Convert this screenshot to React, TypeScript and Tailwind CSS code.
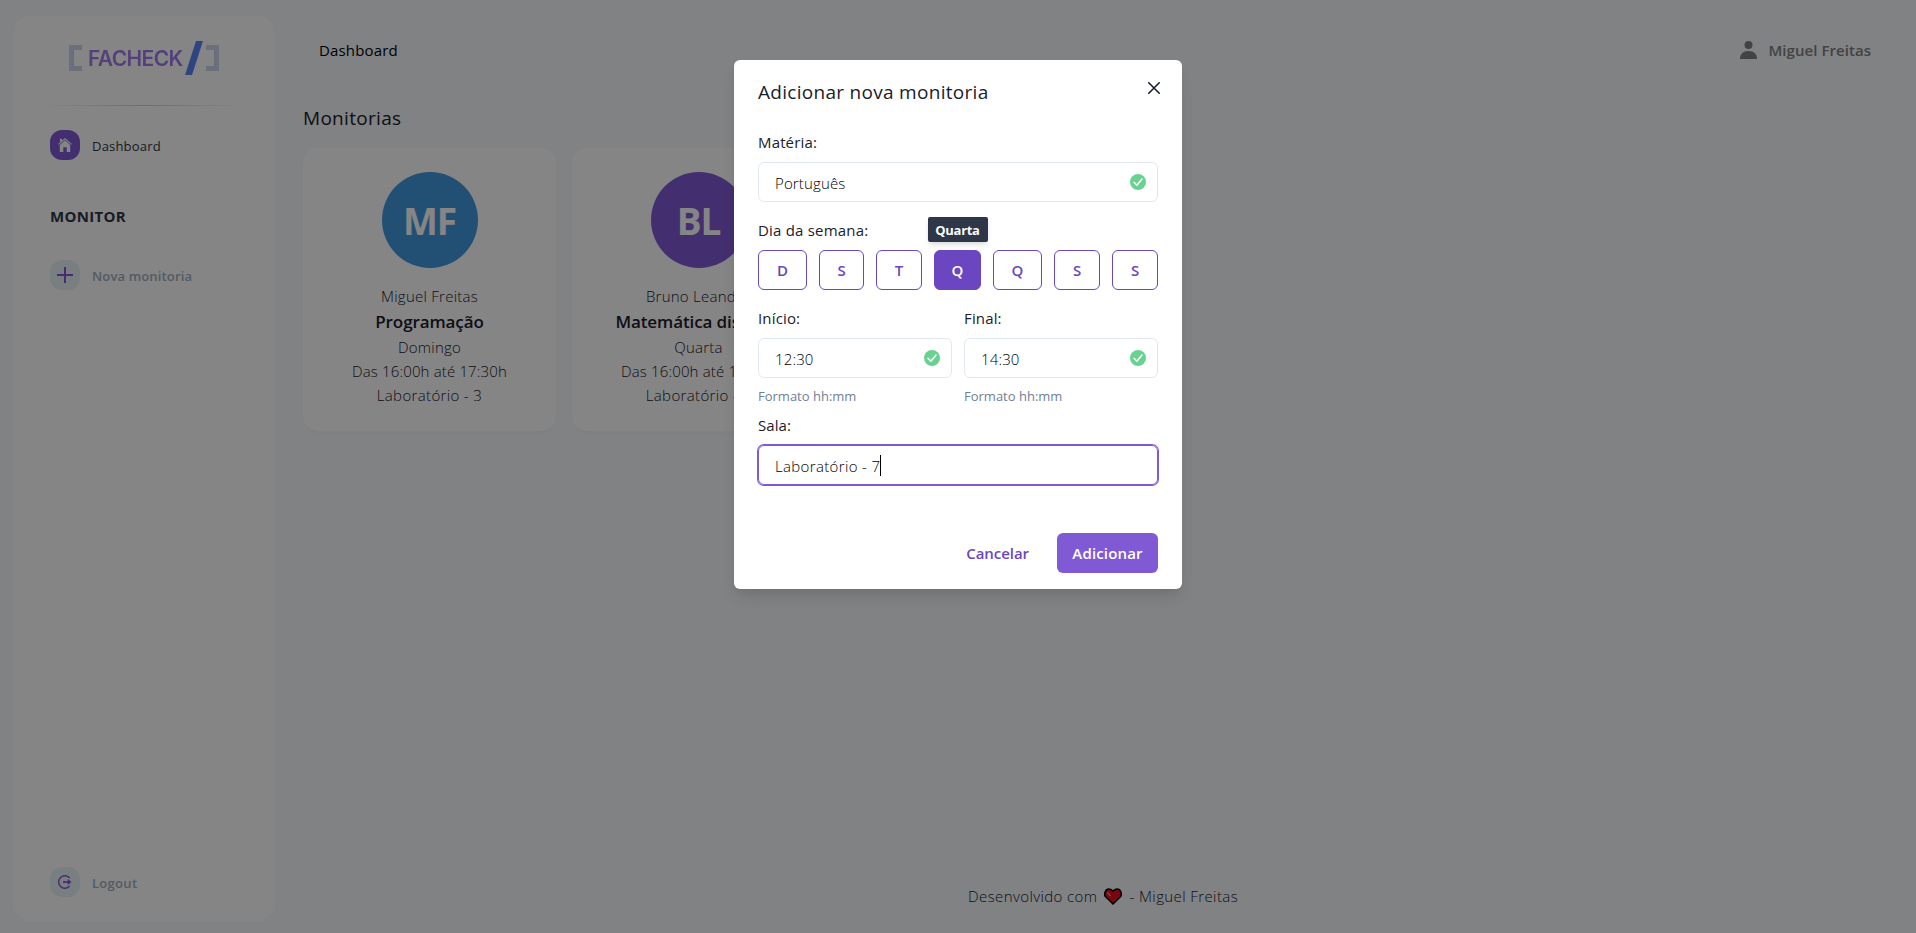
import type { ReactNode } from "react";

type Monitoria = {
  initials: string;
  color: string;
  name: string;
  subject: string;
  day: string;
  time: string;
  room: string;
};

const monitorias: Monitoria[] = [
  { initials: "MF", color: "bg-[#4299e1]", name: "Miguel Freitas", subject: "Programação", day: "Domingo", time: "Das 16:00h até 17:30h", room: "Laboratório - 3" },
  { initials: "BL", color: "bg-[#805ad5]", name: "Bruno Leandro", subject: "Matemática discreta", day: "Quarta", time: "Das 16:00h até 17:30h", room: "Laboratório - 5" },
];

const days = [
  { label: "D", width: "w-[49px]" },
  { label: "S", width: "w-[45px]" },
  { label: "T", width: "w-[46px]" },
  { label: "Q", width: "w-[47px]", active: true },
  { label: "Q", width: "w-[49px]" },
  { label: "S", width: "w-[46px]" },
  { label: "S", width: "w-[46px]" },
];

function Logo() {
  return (
    <div className="mt-[25px] ml-[55px] flex h-[34px] items-center">
      <svg width="13" height="26" viewBox="0 0 13 26" fill="#ccd6eb"><path d="M0 0h13v5H5v16h8v5H0z" /></svg>
      <span className="ml-[6px] w-[98px] pt-0.5 whitespace-nowrap bg-linear-to-r from-[#a57be8] to-[#9f78f0] bg-clip-text font-[Inter] text-[21px] leading-[34px] font-semibold tracking-[-0.6px] text-transparent">FACHECK</span>
      <svg width="18" height="34" viewBox="0 0 18 34" fill="#5a85fa" className="-ml-px"><path d="M11 0h7L7 34H0z" /></svg>
      <svg width="13" height="26" viewBox="0 0 13 26" fill="#ccd6eb" className="ml-[3px]"><path d="M13 0H0v5h8v16H0v5h13z" /></svg>
    </div>
  );
}

function HomeIcon() {
  return (
    <svg width="14" height="14" viewBox="0 0 14 14" fill="#fff">
      <path d="M2 0.8h2v1.6L2 4.2z" />
      <path d="M7 0 13.8 6 13.1 6.8 7 1.4 0.9 6.8 0.2 6z" />
      <path d="M7 2.3 12.2 7v7H8.7V9.2H5.3V14H1.8V7z" />
    </svg>
  );
}

function LogoutIcon() {
  return (
    <svg width="14" height="14" viewBox="0 0 14 14" fill="none" stroke="#805ad5" strokeWidth="1.4">
      <path d="M11.6 3A6.2 6.2 0 1 0 11.6 11" />
      <path d="M5 7h5.5" strokeWidth="1.8" />
      <path d="M9.7 3.9 13.6 7 9.7 10.1z" fill="#805ad5" stroke="none" />
    </svg>
  );
}

function NavItem({ icon, active, label, className }: { icon: ReactNode; active?: boolean; label: string; className: string }) {
  return (
    <div className="flex h-[30px] items-center">
      <span className={`flex size-[30px] items-center justify-center rounded-[12px] ${active ? "bg-[#805ad5]" : "bg-[#e9f1f7]"}`}>{icon}</span>
      <span className={`ml-3 pt-[3px] whitespace-nowrap ${className}`}>{label}</span>
    </div>
  );
}

function CheckMark() {
  return (
    <svg width="16" height="16" viewBox="0 0 16 16">
      <circle cx="8" cy="8" r="8" fill="#68d391" />
      <path d="M4 8.4 6.9 11.2 12 5" fill="none" stroke="#fff" strokeWidth="1.5" strokeLinecap="round" strokeLinejoin="round" />
    </svg>
  );
}

function Field({ label, value, helper }: { label: string; value: string; helper?: string }) {
  return (
    <div className="flex-1">
      <div className="mb-2 h-6 text-[15px] leading-6 font-medium tracking-[0.15px]">{label}</div>
      <div className="flex h-10 items-center justify-between rounded-md border border-[#e2e8f0] pr-[11px] pl-4">
        <span className="pt-0.5 text-[15px] font-light tracking-[0.15px] text-black">{value}</span>
        <CheckMark />
      </div>
      {helper && <div className="mt-2 h-5 text-[13px] leading-[21px] text-[#718096]">{helper}</div>}
    </div>
  );
}

function Modal() {
  return (
    <div className="relative mt-[60px] h-[529px] w-[448px] rounded-md bg-white px-6 text-[#1a202c] shadow-[0_10px_15px_-3px_rgba(0,0,0,0.1),0_4px_6px_-2px_rgba(0,0,0,0.05)]">
      <div className="flex h-[70px] items-start justify-between">
        <h2 className="pt-4 text-[19px] leading-8 font-medium tracking-[0.29px]">Adicionar nova monitoria</h2>
        <svg className="mt-[22px] -mr-[2px]" width="12" height="12" viewBox="0 0 12 12" fill="none" stroke="#1a202c" strokeWidth="1.6" strokeLinecap="round"><path d="m.8.8 10.4 10.4M11.2.8.8 11.2" /></svg>
      </div>
      <Field label="Matéria:" value="Português" />
      <div className="mt-4 mb-2 h-6 text-[15px] leading-6 font-medium tracking-[0.2px]">Dia da semana:</div>
      <div className="flex gap-3">
        {days.map((d, i) => (
          <div key={i} className={`relative flex h-10 items-center justify-center rounded-md border border-[#6b46c1] pt-px text-[15px] font-semibold ${d.width} ${d.active ? "bg-[#6b46c1] text-white" : "text-[#6b46c1]"}`}>
            {d.label}
            {d.active && (
              <div className="absolute -top-[34px] flex h-[25px] w-[60px] items-center justify-center rounded-xs bg-[#2d3748] pt-0.5 text-[13px] font-bold tracking-[-0.3px] text-[#f7fafc] shadow-md">Quarta</div>
            )}
          </div>
        ))}
      </div>
      <div className="mt-4 flex gap-3">
        <Field label="Início:" value="12:30" helper="Formato hh:mm" />
        <Field label="Final:" value="14:30" helper="Formato hh:mm" />
      </div>
      <div className="mt-[7px] mb-2 h-6 text-[15px] leading-6 font-medium tracking-[0.05px]">Sala:</div>
      <div className="flex h-10 items-center rounded-md border border-[#805ad5] pl-4 shadow-[0_0_0_1px_#805ad5]">
        <span className="pt-0.5 text-[15px] font-light tracking-[0.35px] text-black">Laboratório - 7</span>
        <span className="h-[21px] w-px bg-black" />
      </div>
      <div className="mt-12 flex h-10 items-center justify-end text-[15px] font-semibold">
        <span className="mr-7 pt-px text-[#6b46c1] tracking-[-0.05px]">Cancelar</span>
        <span className="flex h-10 w-[101px] items-center justify-center rounded-md bg-[#805ad5] pt-px tracking-[0.15px] text-white">Adicionar</span>
      </div>
    </div>
  );
}

function Heart() {
  return (
    <svg width="18" height="17" viewBox="0 0 18 17" className="mx-[7px]">
      <path d="M9 16 1.4 8.5C-.2 6.3 1 1 5 1c2 0 3.2 1 4 2.2C9.8 2 11 1 13 1c4 0 5.2 5.3 3.6 7.5z" fill="#e8101c" stroke="#000" strokeWidth="1.5" />
      <path d="M3.5 4.5 6.5 8" stroke="#f58b8b" strokeWidth="1.3" />
    </svg>
  );
}

export default function App() {
  return (
    <div className="relative h-[933px] w-[1916px] overflow-hidden bg-[#f7fafc] font-['Open_Sans','Noto_Sans',sans-serif] text-[#1a202c]">
      <div className="flex h-full">
        <aside className="mt-4 ml-[14px] flex h-[905px] w-[260px] flex-col rounded-2xl bg-white">
          <Logo />
          <div className="mt-[30px] ml-[30px] h-px w-[200px] bg-linear-to-r from-transparent via-[#cfcfcf] to-transparent" />
          <nav className="mt-6 ml-9 flex flex-1 flex-col">
            <NavItem active icon={<HomeIcon />} label="Dashboard" className="text-[13px] font-medium tracking-[0.2px] text-[#2d3748]" />
            <div className="mt-11 mb-8 h-6 text-[15px] leading-6 font-bold tracking-[0.3px] text-[#2d3748]">MONITOR</div>
            <NavItem icon={<svg width="16" height="16" viewBox="0 0 16 16" stroke="#805ad5" strokeWidth="2"><path d="M8 0v16M0 8h16" /></svg>} label="Nova monitoria" className="text-[13px] font-semibold tracking-[0.15px] text-[#a0aec0]" />
            <div className="mt-auto mb-6">
              <NavItem icon={<LogoutIcon />} label="Logout" className="text-[13px] font-semibold tracking-[0.3px] text-[#a0aec0]" />
            </div>
          </nav>
        </aside>
        <main className="ml-[29px] flex flex-1 flex-col">
          <header className="mt-[38px] mr-[45px] ml-4 flex h-6 items-center justify-between">
            <span className="text-[15px] font-medium tracking-[0.15px] text-black">Dashboard</span>
            <span className="flex items-center text-[#808080]">
              <svg width="17" height="18" viewBox="0 0 17 18" fill="currentColor"><circle cx="8.5" cy="4" r="4" /><path d="M0 18c0-5 3-8 8.500-8s8.500 3 8.500 8z" /></svg>
              <span className="ml-3 text-[15px] font-semibold tracking-[0.05px]">Miguel Freitas</span>
            </span>
          </header>
          <h1 className="mt-10 h-8 text-[19px] leading-8 font-medium tracking-[0.3px]">Monitorias</h1>
          <div className="mt-[14px] flex gap-4">
            {monitorias.map((m) => (
              <article key={m.initials} className="flex h-[283px] w-[253px] flex-col items-center rounded-[15px] bg-white pt-6 text-[15px] leading-6 font-light tracking-[0.25px] text-[#1a202c] shadow-[0_2px_5px_rgba(0,0,0,0.03)]">
                <div className={`mb-4 flex size-24 items-center justify-center rounded-full pt-0.5 text-[37px] font-bold tracking-[-1.2px] text-white ${m.color}`}>{m.initials}</div>
                <div className="h-6">{m.name}</div>
                <div className="h-[27px] text-[17px] leading-[27px] font-semibold tracking-[-0.1px]">{m.subject}</div>
                <div>{m.day}</div>
                <div className="tracking-[0.15px]">{m.time}</div>
                <div className="tracking-[0.35px]">{m.room}</div>
              </article>
            ))}
          </div>
          <footer className="mt-auto mb-[25px] ml-[665px] flex h-6 items-center text-[15px] font-light whitespace-nowrap tracking-[0.4px]">
            <span>Desenvolvido com</span>
            <Heart />
            <span>- Miguel Freitas</span>
          </footer>
        </main>
      </div>
      <div className="absolute inset-0 flex items-start justify-center bg-black/48">
        <Modal />
      </div>
    </div>
  );
}
